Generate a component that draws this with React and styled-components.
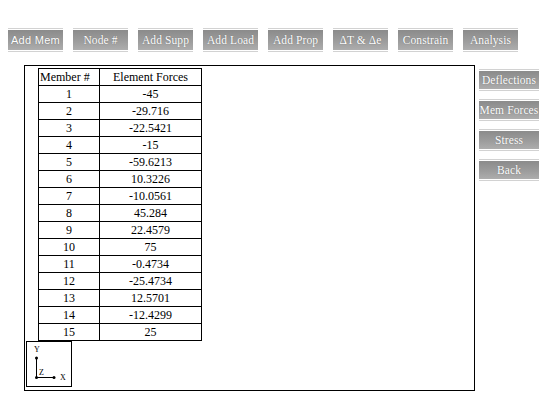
import React from 'react';
import styled, { createGlobalStyle } from 'styled-components';

const GlobalStyle = createGlobalStyle`
    body {
        margin: 0;
        background: #fff;
        font-family: "Liberation Serif", "Times New Roman", serif;
    }
`

const Page = styled.div`
    padding: 28px 0 0 8px;
`
const Toolbar = styled.div`
    display: flex;
    gap: 10px;
`
const ButtonFrame = styled.div`
    width: ${props => props.width}px;
    padding: 1px 0;
    border-top: 1px solid #d2d2d2;
    border-bottom: 1px solid #d2d2d2;
    cursor: pointer;
`
const ButtonFace = styled.div`
    height: ${props => props.height}px;
    line-height: ${props => props.height}px;
    background: linear-gradient(to bottom, #8b8b8b 0%, #9c9c9c 55%, #adadad 100%);
    color: #fff;
    text-align: center;
    white-space: nowrap;
    overflow: hidden;
    font-family: ${props => props.sans ? '"Liberation Sans", Arial, sans-serif' : '"Liberation Serif", "Times New Roman", serif'};
    font-size: ${props => props.sans ? '11px' : '11.5px'};
    letter-spacing: ${props => props.sans ? '0.3px' : '0.1px'};
    text-shadow: 0 0 1px rgba(0, 0, 0, 0.35);
`
const Main = styled.div`
    display: flex;
    align-items: flex-start;
    margin-top: 13px;
    padding-left: 16px;
`
const Panel = styled.div`
    box-sizing: border-box;
    width: 451px;
    height: 326px;
    border: 1px solid #000;
    padding: 2px 0 0 1px;
`
const ForceTable = styled.table`
    border-collapse: collapse;
    margin-left: 12px;
    font-size: 12px;
    color: #000;
`
const Cell = styled.td`
    border: 1px solid #000;
    padding: 0;
    height: 16px;
    line-height: 16px;
    width: ${props => props.width}px;
    text-align: ${props => props.left ? 'left' : 'center'};
    padding-left: ${props => props.left ? '1px' : '0'};
`
const AxisBox = styled.div`
    width: 46px;
    height: 46px;
    box-sizing: border-box;
    border: 1px solid #000;
`
const SideColumn = styled.div`
    display: flex;
    flex-direction: column;
    gap: 8px;
    margin: 4px 0 0 4px;
`

const topButtons = [
    { label: 'Add Mem', sans: true },
    { label: 'Node #' },
    { label: 'Add Supp' },
    { label: 'Add Load' },
    { label: 'Add Prop' },
    { label: '\u0394T & \u0394e' },
    { label: 'Constrain' },
    { label: 'Analysis' },
];

const sideButtons = ['Deflections', 'Mem Forces', 'Stress', 'Back'];

const forces = [
    -45, -29.716, -22.5421, -15, -59.6213, 10.3226, -10.0561, 45.284,
    22.4579, 75, -0.4734, -25.4734, 12.5701, -12.4299, 25,
];

function GreyButton({ label, width, height, sans }) {
    return (
        <ButtonFrame width={width}>
            <ButtonFace height={height} sans={sans}>{label}</ButtonFace>
        </ButtonFrame>
    );
}

function Axes() {
    return (
        <AxisBox>
            <svg width="44" height="44" viewBox="0 0 44 44">
                <g fontFamily="'Liberation Serif', serif" fontSize="8" fill="#000">
                    <text x="7" y="10">Y</text>
                    <text x="12" y="33">Z</text>
                    <text x="33" y="38">X</text>
                </g>
                <path d="M9.5 16 V35.5 H27" stroke="#000" strokeWidth="1" fill="none" />
                <circle cx="9.5" cy="16" r="1.5" fill="#000" />
                <circle cx="9.5" cy="35.5" r="1.5" fill="#000" />
                <circle cx="27" cy="35.5" r="1.5" fill="#000" />
            </svg>
        </AxisBox>
    );
}

export default function App() {
    return (
        <Page>
            <GlobalStyle />
            <Toolbar>
                {topButtons.map(b => (
                    <GreyButton key={b.label} label={b.label} sans={b.sans} width={55} height={20} />
                ))}
            </Toolbar>
            <Main>
                <Panel>
                    <ForceTable>
                        <tbody>
                            <tr>
                                <Cell width={59} left>Member #</Cell>
                                <Cell width={101}>Element Forces</Cell>
                            </tr>
                            {forces.map((f, i) => (
                                <tr key={i}>
                                    <Cell>{i + 1}</Cell>
                                    <Cell>{f}</Cell>
                                </tr>
                            ))}
                        </tbody>
                    </ForceTable>
                    <Axes />
                </Panel>
                <SideColumn>
                    {sideButtons.map(label => (
                        <GreyButton key={label} label={label} width={60} height={18} />
                    ))}
                </SideColumn>
            </Main>
        </Page>
    );
}
